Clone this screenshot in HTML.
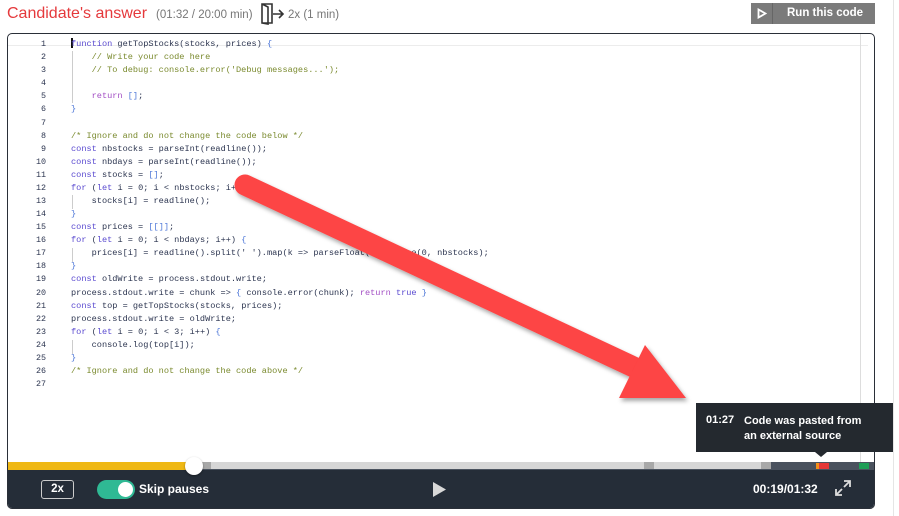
<!DOCTYPE html>
<html><head><meta charset="utf-8"><style>
*{margin:0;padding:0;box-sizing:border-box}
body{width:899px;height:516px;background:#fff;position:relative;overflow:hidden;font-family:"Liberation Sans",sans-serif}
.abs{position:absolute}
.code{position:absolute;left:0;top:39px;font-family:"Liberation Mono",monospace;font-size:8.6px;color:#2c3550;white-space:pre}
.ln{position:absolute;width:46px;text-align:right;color:#2c3550;font-size:8.4px}
.tx{position:absolute;left:71px}
.k{color:#5a4ad0}.r{color:#a34fc4}.c{color:#7a8a2e}.b{color:#4f78d8}
.guide{position:absolute;width:1px;background:#ccc}
</style></head><body>
<div class="abs" style="left:7px;top:5px;font-size:16px;color:#e5393c">Candidate's answer</div>
<div class="abs" style="left:156px;top:9px;font-size:11.5px;color:#777">(01:32 / 20:00 min)</div>
<svg class="abs" style="left:260px;top:3px" width="26" height="22" viewBox="0 0 26 22"><path d="M2 1 L12 1 L12 20 L2 20 Z M2 1 L8 4 L8 21 L2 20" fill="none" stroke="#333" stroke-width="1.6"/><path d="M13 11 H23 M19 7 L23 11 L19 15" fill="none" stroke="#333" stroke-width="1.6"/></svg>
<div class="abs" style="left:288px;top:9px;font-size:11.5px;color:#777">2x (1 min)</div>
<div class="abs" style="left:751px;top:3px;width:124px;height:21px;background:#7b7b7b;color:#fff;font-size:11.5px;font-weight:bold">
<div class="abs" style="left:21px;top:0;width:1px;height:21px;background:#666"></div>
<svg class="abs" style="left:6px;top:5px" width="10" height="11"><path d="M1.5 1.5 L8.5 5.5 L1.5 9.5 Z" fill="none" stroke="#fff" stroke-width="1.8"/></svg>
<div class="abs" style="left:36px;top:4px">Run this code</div></div>
<div class="abs" style="left:893px;top:0;width:1px;height:516px;background:#e5e5e5"></div>
<div class="abs" style="left:7px;top:33px;width:868px;height:476px;border:1.5px solid #2a2f38;border-radius:5px;overflow:hidden;background:#fff">
<div class="abs" style="left:0;top:11px;width:860px;height:1px;background:#ececec"></div>
<div class="abs" style="left:852px;top:0;width:1px;height:430px;background:#ddd"></div>
<div class="abs" style="left:63px;top:4px;width:2px;height:10px;background:#111"></div>
</div>
<div class="guide" style="left:72px;top:51px;height:52px"></div>
<div class="guide" style="left:72px;top:195px;height:14px"></div>
<div class="guide" style="left:72px;top:248px;height:14px"></div>
<div class="guide" style="left:72px;top:340px;height:14px"></div>
<div class="code">
<div class="ln" style="top:0">1</div><div class="tx" style="top:0"><span class="k">function</span> getTopStocks(stocks, prices) <span class="b">{</span></div>
<div class="ln" style="top:13.1px">2</div><div class="tx c" style="top:13.1px">    // Write your code here</div>
<div class="ln" style="top:26.2px">3</div><div class="tx c" style="top:26.2px">    // To debug: console.error('Debug messages...');</div>
<div class="ln" style="top:39.2px">4</div>
<div class="ln" style="top:52.3px">5</div><div class="tx" style="top:52.3px">    <span class="r">return</span> <span class="b">[]</span>;</div>
<div class="ln" style="top:65.4px">6</div><div class="tx b" style="top:65.4px">}</div>
<div class="ln" style="top:78.5px">7</div>
<div class="ln" style="top:91.6px">8</div><div class="tx c" style="top:91.6px">/* Ignore and do not change the code below */</div>
<div class="ln" style="top:104.6px">9</div><div class="tx" style="top:104.6px"><span class="k">const</span> nbstocks = parseInt(readline());</div>
<div class="ln" style="top:117.7px">10</div><div class="tx" style="top:117.7px"><span class="k">const</span> nbdays = parseInt(readline());</div>
<div class="ln" style="top:130.8px">11</div><div class="tx" style="top:130.8px"><span class="k">const</span> stocks = <span class="b">[]</span>;</div>
<div class="ln" style="top:143.9px">12</div><div class="tx" style="top:143.9px"><span class="k">for</span> (<span class="k">let</span> i = 0; i &lt; nbstocks; i++) <span class="b">{</span></div>
<div class="ln" style="top:157px">13</div><div class="tx" style="top:157px">    stocks[i] = readline();</div>
<div class="ln" style="top:170px">14</div><div class="tx b" style="top:170px">}</div>
<div class="ln" style="top:183.1px">15</div><div class="tx" style="top:183.1px"><span class="k">const</span> prices = <span class="b">[[]]</span>;</div>
<div class="ln" style="top:196.2px">16</div><div class="tx" style="top:196.2px"><span class="k">for</span> (<span class="k">let</span> i = 0; i &lt; nbdays; i++) <span class="b">{</span></div>
<div class="ln" style="top:209.3px">17</div><div class="tx" style="top:209.3px">    prices[i] = readline().split(' ').map(k =&gt; parseFloat(k)).slice(0, nbstocks);</div>
<div class="ln" style="top:222.4px">18</div><div class="tx b" style="top:222.4px">}</div>
<div class="ln" style="top:235.4px">19</div><div class="tx" style="top:235.4px"><span class="k">const</span> oldWrite = process.stdout.write;</div>
<div class="ln" style="top:248.5px">20</div><div class="tx" style="top:248.5px">process.stdout.write = chunk =&gt; <span class="b">{</span> console.error(chunk); <span class="r">return</span> <span class="k">true</span> <span class="b">}</span></div>
<div class="ln" style="top:261.6px">21</div><div class="tx" style="top:261.6px"><span class="k">const</span> top = getTopStocks(stocks, prices);</div>
<div class="ln" style="top:274.7px">22</div><div class="tx" style="top:274.7px">process.stdout.write = oldWrite;</div>
<div class="ln" style="top:287.8px">23</div><div class="tx" style="top:287.8px"><span class="k">for</span> (<span class="k">let</span> i = 0; i &lt; 3; i++) <span class="b">{</span></div>
<div class="ln" style="top:300.8px">24</div><div class="tx" style="top:300.8px">    console.log(top[i]);</div>
<div class="ln" style="top:313.9px">25</div><div class="tx b" style="top:313.9px">}</div>
<div class="ln" style="top:327px">26</div><div class="tx c" style="top:327px">/* Ignore and do not change the code above */</div>
<div class="ln" style="top:340.1px">27</div>
</div>
<svg class="abs" style="left:0;top:0" width="899" height="516"><defs><filter id="s" x="-10%" y="-10%" width="120%" height="120%"><feDropShadow dx="2" dy="3" stdDeviation="2" flood-color="#000" flood-opacity="0.35"/></filter></defs>
<g filter="url(#s)" fill="#fd4444"><path d="M245 185 L640 370" stroke="#fd4444" stroke-width="21" stroke-linecap="round"/><path d="M619 398 L645 345 L686 398 Z"/></g></svg>
<div class="abs" style="left:8px;top:462px;width:866px;height:8px;background:#4a525e"></div>
<div class="abs" style="left:8px;top:462px;width:185px;height:8px;background:#efb814"></div>
<div class="abs" style="left:193px;top:462px;width:577px;height:7px;background:#d6d6d6"></div>
<div class="abs" style="left:193px;top:462px;width:18px;height:7px;background:#a8a8a8"></div>
<div class="abs" style="left:644px;top:462px;width:10px;height:7px;background:#a8a8a8"></div>
<div class="abs" style="left:761px;top:462px;width:10px;height:7px;background:#a8a8a8"></div>
<div class="abs" style="left:816px;top:463px;width:3px;height:6px;background:#f39019"></div>
<div class="abs" style="left:819px;top:463px;width:10px;height:6px;background:#e53838"></div>
<div class="abs" style="left:859px;top:463px;width:10px;height:6px;background:#1f9e57"></div>
<div class="abs" style="left:8px;top:470px;width:866px;height:38px;background:#252d38;border-radius:0 0 4px 4px;color:#fff;font-weight:bold;font-size:12px">
<div class="abs" style="left:33px;top:10px;width:33px;height:19px;border:1px solid #ccc;border-radius:3px;text-align:center;line-height:17px;font-size:11.5px">2x</div>
<div class="abs" style="left:89px;top:10px;width:38px;height:19px;border-radius:10px;background:#2fb994"></div>
<div class="abs" style="left:110px;top:12px;width:15px;height:15px;border-radius:50%;background:#fff"></div>
<div class="abs" style="left:131px;top:12px;font-size:12px">Skip pauses</div>
<svg class="abs" style="left:423px;top:10px" width="18" height="20"><path d="M2 2 L15 9.5 L2 17 Z" fill="#d8d8d8"/></svg>
<div class="abs" style="left:745px;top:12px;font-size:12px">00:19/01:32</div>
<svg class="abs" style="left:826px;top:9px" width="18" height="18"><path d="M10 2 H16 V8 M16 2 L10 8 M8 16 H2 V10 M2 16 L8 10" fill="none" stroke="#ddd" stroke-width="1.8"/></svg>
</div>
<div class="abs" style="left:185px;top:457px;width:18px;height:18px;border-radius:50%;background:#fff;box-shadow:0 1px 2px rgba(0,0,0,.4)"></div>
<div class="abs" style="left:696px;top:403px;width:197px;height:49px;background:#24292f;color:#fff;font-weight:bold;font-size:11px">
<div class="abs" style="left:10px;top:11px">01:27</div>
<div class="abs" style="left:48px;top:11px;line-height:15px">Code was pasted from<br>an external source</div>
</div>
<div class="abs" style="left:815px;top:452px;width:0;height:0;border-left:6px solid transparent;border-right:6px solid transparent;border-top:5px solid #24292f"></div>
</body></html>
